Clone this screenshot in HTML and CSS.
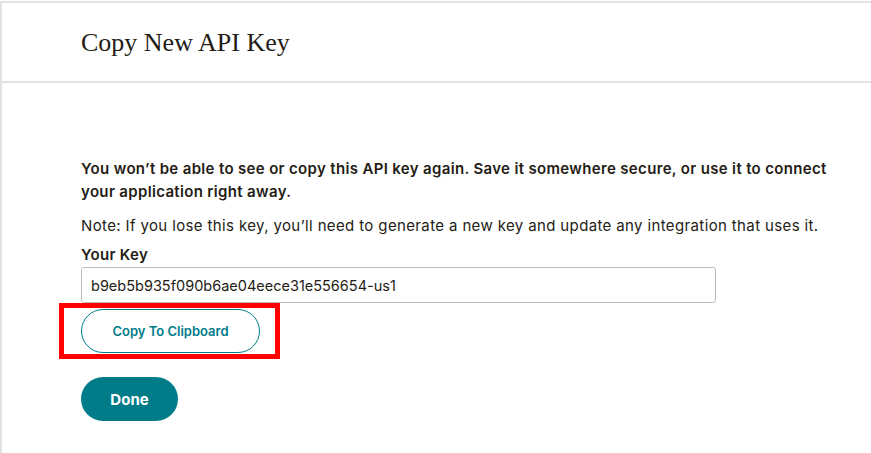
FILE: index.html
```html
<!DOCTYPE html>
<html lang="en">
<head>
    <meta charset="UTF-8" />
    <meta name="viewport" content="width=device-width, initial-scale=1" />
    <title>Copy New API Key</title>
    <link rel="stylesheet" href="styles.css">
</head>
<body>

<div class="panel">
    <header class="panel-header">
        <h1>Copy New API Key</h1>
    </header>

    <main class="panel-body">
        <p class="warning">You won’t be able to see or copy this API key again. Save it somewhere secure, or use it to connect your application right away.</p>
        <p class="note">Note: If you lose this key, you’ll need to generate a new key and update any integration that uses it.</p>

        <label for="apiKey">Your Key</label>
        <input type="text" id="apiKey" value="b9eb5b935f090b6ae04eece31e556654-us1" readonly />

        <div class="highlight">
            <button type="button" class="btn btn-outline">Copy To Clipboard</button>
        </div>

        <button type="button" class="btn btn-primary">Done</button>
    </main>
</div>

</body>
</html>
```

FILE: styles.css
```css
body {
    margin: 0;
    font-family: Inter, "Liberation Sans", sans-serif;
    color: #241c15;
    background: #fff;
}

.panel {
    margin-top: 1px;
    border-top: 2px solid #e2e2e2;
    border-left: 2px solid #e2e2e2;
    min-height: 450px;
}

.panel-header {
    height: 78px;
    border-bottom: 2px solid #e2e2e2;
    padding-left: 79px;
    display: flex;
    align-items: center;
}

.panel-header h1 {
    margin: 2px 0 0;
    font-family: "Liberation Serif", "DejaVu Serif", serif;
    font-weight: normal;
    font-size: 26px;
}

.panel-body {
    padding: 74px 0 0 79px;
}

.warning {
    margin: 0;
    font-size: 15px;
    font-weight: 600;
    line-height: 23px;
    letter-spacing: 0.34px;
    max-width: 760px;
}

.note {
    margin: 11px 0 0;
    font-size: 15px;
    line-height: 23px;
    letter-spacing: 0.37px;
}

label {
    display: block;
    margin-top: 7px;
    font-size: 15px;
    font-weight: 600;
    line-height: 22px;
    letter-spacing: 0.3px;
}

input[type="text"] {
    display: block;
    box-sizing: border-box;
    width: 635px;
    height: 36px;
    margin-top: 1px;
    padding: 0 9px;
    border: 1px solid #bdbdbd;
    border-radius: 3px;
    font-family: inherit;
    font-size: 14.5px;
    color: #241c15;
}

.highlight {
    position: relative;
    margin-top: 6px;
    width: 179px;
}

.highlight::after {
    content: "";
    position: absolute;
    left: -22px;
    top: -6px;
    width: 211px;
    height: 46px;
    border: 5px solid #ff0000;
    pointer-events: none;
}

.btn {
    display: block;
    height: 44px;
    border-radius: 22px;
    font-family: inherit;
    font-weight: 600;
    cursor: pointer;
}

.btn-outline {
    width: 179px;
    background: #fff;
    border: 1px solid #007c89;
    color: #007c89;
    font-size: 13px;
}

.btn-primary {
    width: 97px;
    margin-top: 24px;
    background: #007c89;
    border: none;
    color: #fff;
    font-size: 15px;
    font-weight: 700;
}
```
